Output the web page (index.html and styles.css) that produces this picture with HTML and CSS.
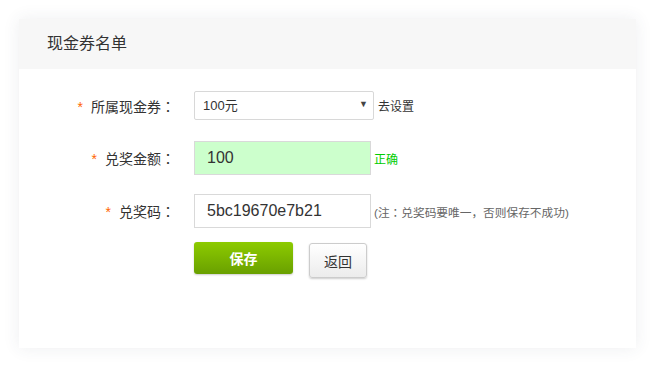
FILE: index.html
```html
<!DOCTYPE html>
<html lang="zh-CN">
<head>
    <meta charset="UTF-8">
    <meta name="viewport" content="width=device-width, initial-scale=1.0">
    <title>现金券名单</title>
    <link rel="stylesheet" href="styles.css">
</head>
<body>
    <div class="panel">
        <div class="panel-head">现金券名单</div>
        <form class="panel-body" id="codeForm">
            <div class="row row-select">
                <label class="label" for="coupon"><span class="req">*</span>所属现金券<span class="colon" lang="ja">：</span></label>
                <div class="field">
                    <span class="select-wrap">
                        <select id="coupon" name="coupon">
                            <option>100元</option>
                        </select>
                        <span class="arrow">▼</span>
                    </span>
                    <a class="tip-link" href="#">去设置</a>
                </div>
            </div>
            <div class="row row-amount">
                <label class="label" for="amount"><span class="req">*</span>兑奖金额<span class="colon" lang="ja">：</span></label>
                <div class="field">
                    <input type="text" id="amount" name="amount" class="ok" value="100">
                    <span class="tip-ok">正确</span>
                </div>
            </div>
            <div class="row">
                <label class="label" for="code"><span class="req">*</span>兑奖码<span class="colon" lang="ja">：</span></label>
                <div class="field">
                    <input type="text" id="code" name="code" value="5bc19670e7b21">
                    <span class="tip">(注<span class="colon" lang="ja">：</span>兑奖码要唯一，否则保存不成功)</span>
                </div>
            </div>
            <div class="row row-actions">
                <span class="label"></span>
                <div class="field field-top">
                    <button type="submit" class="btn-save">保存</button>
                    <button type="button" class="btn-back">返回</button>
                </div>
            </div>
        </form>
    </div>
</body>
</html>
```

FILE: styles.css
```css
body {
    font-family: "Liberation Sans", "Noto Sans CJK SC", sans-serif;
    background-color: #fff;
    margin: 0;
    padding: 19px 20px 19px 19px;
    color: #333;
}
.panel {
    background: #fff;
    height: 329px;
    box-shadow: 0 0 16px rgba(60, 70, 90, 0.09);
}
.panel-head {
    background: #f7f7f7;
    height: 50px;
    line-height: 50px;
    padding-left: 28px;
    font-size: 16px;
    color: #333;
}
.panel-body {
    padding-top: 22px;
}
.row {
    display: grid;
    grid-template-columns: 156px 1fr;
    column-gap: 19px;
    align-items: center;
    margin-bottom: 20px;
}
.row-select {
    margin-bottom: 21px;
}
.row-amount {
    margin-bottom: 19px;
}
.row-actions {
    margin-top: -6px;
}
.label {
    text-align: right;
    font-size: 14px;
    color: #333;
}
.colon {
    font-family: "Noto Sans CJK JP", sans-serif;
}
.req {
    color: #f60;
    margin-right: 8px;
}
.field {
    display: flex;
    align-items: center;
}
.field-top {
    align-items: flex-start;
}
.select-wrap {
    position: relative;
    display: inline-block;
}
select {
    appearance: none;
    -webkit-appearance: none;
    width: 180px;
    height: 29px;
    border: 1px solid #d8d8d8;
    border-radius: 2px;
    background: #fff;
    padding: 0 8px;
    font-family: inherit;
    font-size: 13px;
    color: #333;
}
.arrow {
    position: absolute;
    right: 6px;
    top: 8px;
    font-size: 9px;
    color: #444;
    pointer-events: none;
}
.tip-link {
    margin-left: 4px;
    font-size: 12px;
    color: #333;
    text-decoration: none;
}
input[type="text"] {
    box-sizing: border-box;
    width: 177px;
    height: 34px;
    border: 1px solid #d9d9d9;
    padding: 0 12px;
    font-family: inherit;
    font-size: 16px;
    color: #333;
}
input.ok {
    background: #ccffcc;
}
.tip-ok {
    margin-left: 3px;
    font-size: 12px;
    color: #00cc00;
}
.tip {
    margin-left: 3px;
    font-size: 11.7px;
    color: #666;
}
.btn-save {
    width: 99px;
    height: 32px;
    border: none;
    border-radius: 3px;
    background: linear-gradient(#8dcb00, #69a000);
    box-shadow: 0 1px 2px rgba(0, 0, 0, 0.2);
    color: #fff;
    font-family: inherit;
    font-size: 14px;
    font-weight: bold;
    cursor: pointer;
}
.btn-back {
    margin-left: 16px;
    margin-top: 1px;
    width: 58px;
    height: 35px;
    border: 1px solid #ccc;
    border-radius: 3px;
    background: linear-gradient(#fff, #ececec);
    box-shadow: 0 1px 2px rgba(0, 0, 0, 0.2);
    color: #333;
    font-family: inherit;
    font-size: 14px;
    cursor: pointer;
}
```
